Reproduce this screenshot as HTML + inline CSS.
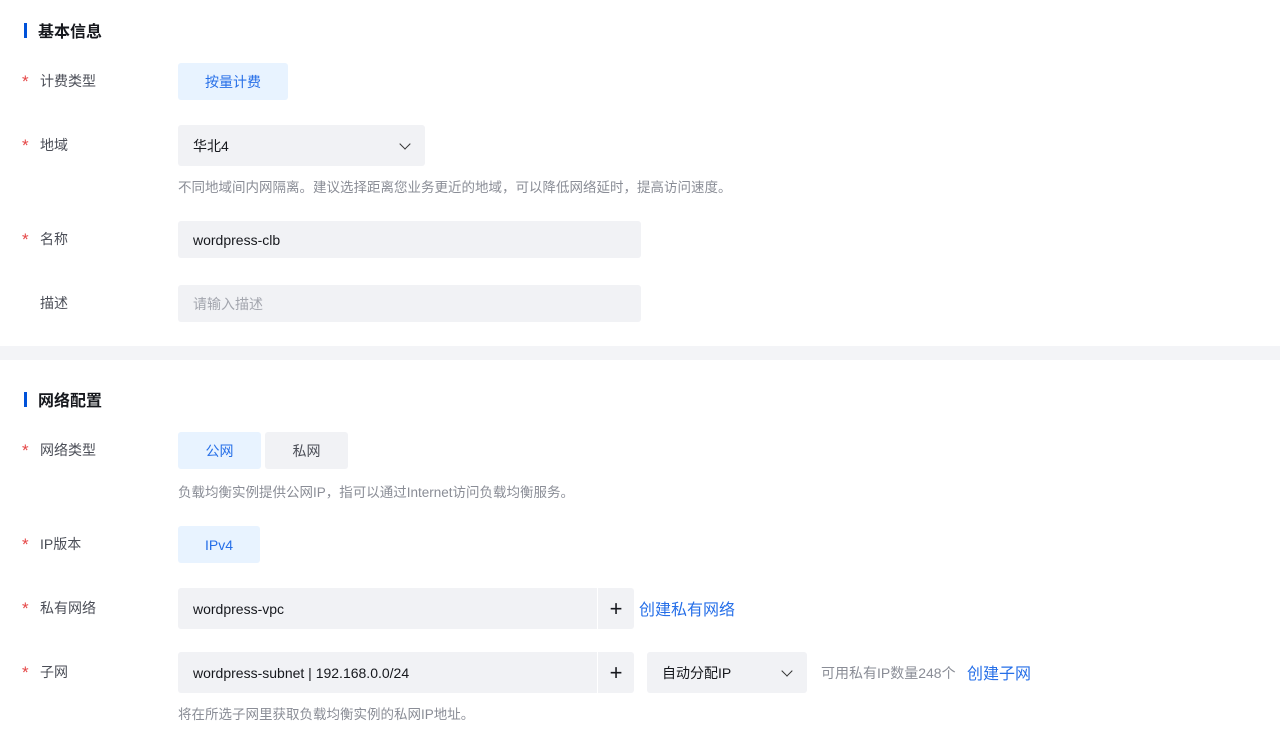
<!DOCTYPE html><html><head><meta charset="utf-8"><style>
*{margin:0;padding:0;box-sizing:border-box}
body{width:1280px;height:745px;background:#fff;font-family:"Liberation Sans","Noto Sans CJK SC",sans-serif;font-size:14px;color:#000;position:relative;overflow:hidden}
.a{position:absolute}
.h{font-size:16px;font-weight:bold;color:#16181d;left:38px}
.bar{left:24px;width:3px;height:15px;background:#0052d9}
.st{left:22px;color:#e54545;font-size:17px}
.lb{left:40px;color:#4b4e57}
.box{background:#f1f2f5;border-radius:3px;display:flex;align-items:center;padding-left:15px;color:#16181d}
.sel{background:#e8f3ff;color:#266fe8;justify-content:center;padding:0}
.btn{justify-content:center;padding:0}
.hint{left:178px;color:#8a8d96;font-size:13.5px}
.chev{position:absolute;right:16px;top:50%;width:8px;height:8px;border-right:1.2px solid #333;border-bottom:1.2px solid #333;transform:translateY(-75%) rotate(45deg)}
.plus{justify-content:center;padding:0;font-size:22px;font-weight:300}
.link{color:#266fe8;font-size:16px}
</style></head><body>
<div class="a bar" style="top:23px"></div><div class="a h" style="top:18px">基本信息</div>
<div class="a st" style="top:72px">*</div><div class="a lb" style="top:71px">计费类型</div>
<div class="a box sel" style="left:178px;top:63px;width:110px;height:37px">按量计费</div>
<div class="a st" style="top:136px">*</div><div class="a lb" style="top:135px">地域</div>
<div class="a box" style="left:178px;top:125px;width:247px;height:41px">华北4<span class="chev"></span></div>
<div class="a hint" style="top:176px">不同地域间内网隔离。建议选择距离您业务更近的地域，可以降低网络延时，提高访问速度。</div>
<div class="a st" style="top:230px">*</div><div class="a lb" style="top:229px">名称</div>
<div class="a box" style="left:178px;top:221px;width:463px;height:37px">wordpress-clb</div>
<div class="a lb" style="top:293px">描述</div>
<div class="a box" style="left:178px;top:285px;width:463px;height:37px;color:#a3a6ae">请输入描述</div>
<div class="a" style="left:0;top:346px;width:1280px;height:14px;background:#f3f4f7"></div>
<div class="a bar" style="top:392px"></div><div class="a h" style="top:387px">网络配置</div>
<div class="a st" style="top:441px">*</div><div class="a lb" style="top:440px">网络类型</div>
<div class="a box sel" style="left:178px;top:432px;width:83px;height:37px">公网</div>
<div class="a box btn" style="left:265px;top:432px;width:83px;height:37px;color:#4b4e57">私网</div>
<div class="a hint" style="top:481px">负载均衡实例提供公网IP，指可以通过Internet访问负载均衡服务。</div>
<div class="a st" style="top:535px">*</div><div class="a lb" style="top:534px">IP版本</div>
<div class="a box sel" style="left:178px;top:526px;width:82px;height:37px">IPv4</div>
<div class="a st" style="top:599px">*</div><div class="a lb" style="top:598px">私有网络</div>
<div class="a box" style="left:178px;top:588px;width:419px;height:41px;border-radius:3px 0 0 3px">wordpress-vpc</div>
<div class="a box plus" style="left:598px;top:588px;width:36px;height:41px;border-radius:0 3px 3px 0">+</div>
<div class="a link" style="left:639px;top:596px">创建私有网络</div>
<div class="a st" style="top:663px">*</div><div class="a lb" style="top:662px">子网</div>
<div class="a box" style="left:178px;top:652px;width:419px;height:41px;border-radius:3px 0 0 3px">wordpress-subnet | 192.168.0.0/24</div>
<div class="a box plus" style="left:598px;top:652px;width:36px;height:41px;border-radius:0 3px 3px 0">+</div>
<div class="a box" style="left:647px;top:652px;width:160px;height:41px">自动分配IP<span class="chev"></span></div>
<div class="a" style="left:821px;top:663px;color:#8a8d96">可用私有IP数量248个</div>
<div class="a link" style="left:967px;top:660px">创建子网</div>
<div class="a hint" style="top:703px">将在所选子网里获取负载均衡实例的私网IP地址。</div>
</body></html>
